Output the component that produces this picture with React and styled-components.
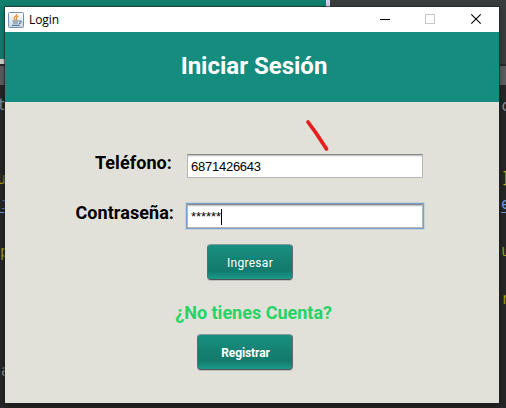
import React from "react";
import styled, { createGlobalStyle } from "styled-components";

const GlobalStyle = createGlobalStyle`
  * { box-sizing: border-box; }
  body { margin: 0; overflow: hidden; }
`;

const Desktop = styled.div`
  position: relative;
  display: flex;
  flex-direction: column;
  width: 506px;
  height: 408px;
  overflow: hidden;
  background: #262626;
`;

const AppStrip = styled.div`
  display: flex;
  height: 64px;
  background: #3a3d3e;
`;

const AppPreview = styled.div`
  width: 330px;
  border-right: 4px solid #d2cdea;
  border-bottom: 5px solid #d5d5cf;
  background: #12806f;
`;

const EditorTabs = styled.div`
  height: 21px;
  border-top: 2px solid #28292a;
  background: #5b5e60;
`;

const Editor = styled.div`
  flex: 1;
  background: #262626;
`;

const CodeGlyph = styled.span`
  position: absolute;
  left: ${(p) => p.$x}px;
  top: ${(p) => p.$y}px;
  height: 17px;
  font: 15px/16px "DejaVu Sans Mono", monospace;
  color: ${(p) => p.$color};
  border-bottom: ${(p) => (p.$link ? "1px solid #6c9be0" : "0")};
`;

const Window = styled.main`
  position: absolute;
  left: 5px;
  top: 7px;
  width: 494px;
  height: 396px;
  display: flex;
  flex-direction: column;
  background: #e1e1d9;
  box-shadow: 0 0 0 1px rgba(30, 35, 35, 0.6), 0 2px 7px rgba(0, 0, 0, 0.4);
`;

const TitleBar = styled.div`
  display: flex;
  align-items: center;
  height: 25px;
  padding-left: 3px;
  background: #fff;
`;

const WindowName = styled.span`
  flex: 1;
  padding-left: 5px;
  font: 12px/24px "Open Sans", sans-serif;
  letter-spacing: -0.1px;
  color: #000;
`;

const WindowControls = styled.svg`
  width: 126px;
  height: 25px;
`;

const Header = styled.header`
  height: 70px;
  padding-left: 14px;
  padding-right: 10px;
  background: #148c7e;
  color: #fff;
  text-align: center;
  font: 700 24px/68px Roboto, sans-serif;
`;

const Form = styled.form`
  display: flex;
  flex-direction: column;
  padding-top: 52px;
`;

const Row = styled.div`
  display: flex;
  height: 24px;
  margin-bottom: ${(p) => p.$gap}px;
`;

const Label = styled.label`
  width: 182px;
  padding-right: ${(p) => p.$inset}px;
  text-align: right;
  white-space: nowrap;
  font: 700 18px/18px Roboto, sans-serif;
  letter-spacing: 0.07px;
  color: #000;
`;

const Field = styled.div`
  display: flex;
  align-items: center;
  width: 236px;
  padding: 1px 3px 0;
  border: 1px solid #b4b6b8;
  border-top-color: #85888b;
  background: linear-gradient(#c9cacb 0 1px, #ececec 1px 2px, #fff 2px);
  box-shadow: ${(p) => (p.$focused ? "0 0 0 1px #76a1cf, 0 0 0 2px rgba(118, 161, 207, 0.22)" : "none")};
  font: 13px/20px "Liberation Sans", sans-serif;
  letter-spacing: ${(p) => (p.$focused ? "-0.05px" : "-0.25px")};
  color: #000;
`;

const Caret = styled.span`
  width: 1px;
  height: 16px;
  background: #000;
`;

const Actions = styled.div`
  display: flex;
  flex-direction: column;
  align-items: flex-end;
  width: 288px;
`;

const Button = styled.button`
  width: ${(p) => p.$width}px;
  height: 36px;
  padding: 1px 0 0 ${(p) => (p.$bold ? 1 : 0)}px;
  border: 1px solid #636b72;
  border-top-color: #83999a;
  border-bottom-color: #4e535b;
  border-radius: 4px;
  background: linear-gradient(#199181, #147e70 55%, #127b6d 76%, #1c9a89);
  box-shadow: 0 1px 0 rgba(120, 120, 120, 0.3);
  color: #fff;
  font: ${(p) => (p.$bold ? 700 : 400)} 12px/32px Roboto, sans-serif;
  letter-spacing: ${(p) => (p.$bold ? -0.1 : 0.3)}px;
`;

const Prompt = styled.p`
  margin: 23px 0 11px;
  width: 327px;
  height: 20px;
  text-align: right;
  white-space: nowrap;
  color: #27d367;
  font: 700 18px/20px Roboto, sans-serif;
`;

const Marker = styled.svg`
  position: absolute;
  left: 298px;
  top: 108px;
  width: 40px;
  height: 48px;
`;

const glyphs = [
  { x: -3, y: 97, text: "t", color: "#87919c" },
  { x: -3, y: 171, text: "u", color: "#9a9c16" },
  { x: 1, y: 196, text: "i", color: "#5c8bd0" },
  { x: -4, y: 196, text: "\u00a0", color: "#5c8bd0", link: true },
  { x: 0, y: 244, text: "p", color: "#9a9c16" },
  { x: 1, y: 363, text: "a", color: "#8d999f" },
  { x: 501, y: 98, text: "c", color: "#87919c" },
  { x: 501, y: 170, text: "]", color: "#b4b41c" },
  { x: 501, y: 196, text: "e", color: "#6c9be0", link: true },
  { x: 501, y: 243, text: "u", color: "#9a9c16" },
  { x: 501, y: 291, text: "r", color: "#9a9c16" },
];

function JavaIcon() {
  return (
    <svg width="16" height="16" viewBox="0 0 16 16" fill="none">
      <defs>
        <linearGradient id="tile" x1="0" y1="0" x2="0" y2="1">
          <stop offset="0" stopColor="#ffffff" />
          <stop offset="1" stopColor="#cbd6e0" />
        </linearGradient>
      </defs>
      <rect x="0.5" y="0.5" width="15" height="15" rx="1" fill="url(#tile)" stroke="#7890a6" />
      <path d="M9 2C9.4 4 5.8 4.4 6.1 6.1C6.3 7.1 7.2 7.2 7.1 8.3M10.4 4.3C8.4 5 8 5.5 8.6 6.5C9 7.2 8.7 7.8 8.2 8.2" stroke="#e8892f" strokeWidth="1.1" />
      <path d="M4.5 9H10.5M5 11H10M4 13.4H11.6M11 9.2C14 8.3 13.9 11 10.9 11.6" stroke="#587b9a" strokeWidth="1.1" />
    </svg>
  );
}

export default function App() {
  return (
    <Desktop>
      <GlobalStyle />
      <AppStrip><AppPreview /></AppStrip>
      <EditorTabs />
      <Editor />
      {glyphs.map((g) => (
        <CodeGlyph key={`${g.x}-${g.y}`} $x={g.x} $y={g.y} $color={g.color} $link={g.link}>{g.text}</CodeGlyph>
      ))}
      <Window>
        <TitleBar>
          <JavaIcon />
          <WindowName>Login</WindowName>
          <WindowControls viewBox="0 0 126 25" fill="none" shapeRendering="crispEdges">
            <path d="M7 12.5H17" stroke="#000" />
            <rect x="52.5" y="7.5" width="9" height="9" stroke="#c9c9c9" />
            <path d="M98.3 7.3L107.7 16.7M107.7 7.3L98.3 16.7" stroke="#000" strokeWidth="1.1" shapeRendering="auto" />
          </WindowControls>
        </TitleBar>
        <Header>Iniciar Sesión</Header>
        <Form>
          <Row $gap={26}>
            <Label $inset={15}>Teléfono:</Label>
            <Field>6871426643</Field>
          </Row>
          <Row $gap={16}>
            <Label $inset={13}>Contraseña:</Label>
            <Field $focused>******<Caret /></Field>
          </Row>
          <Actions><Button type="button" $width={86}>Ingresar</Button></Actions>
          <Prompt>¿No tienes Cuenta?</Prompt>
          <Actions><Button type="button" $width={96} $bold>Registrar</Button></Actions>
        </Form>
      </Window>
      <Marker viewBox="0 0 40 48" fill="none">
        <path d="M10 14L18 25L28.5 41" stroke="#e81e1e" strokeWidth="3.8" strokeLinecap="round" strokeLinejoin="round" />
      </Marker>
    </Desktop>
  );
}
